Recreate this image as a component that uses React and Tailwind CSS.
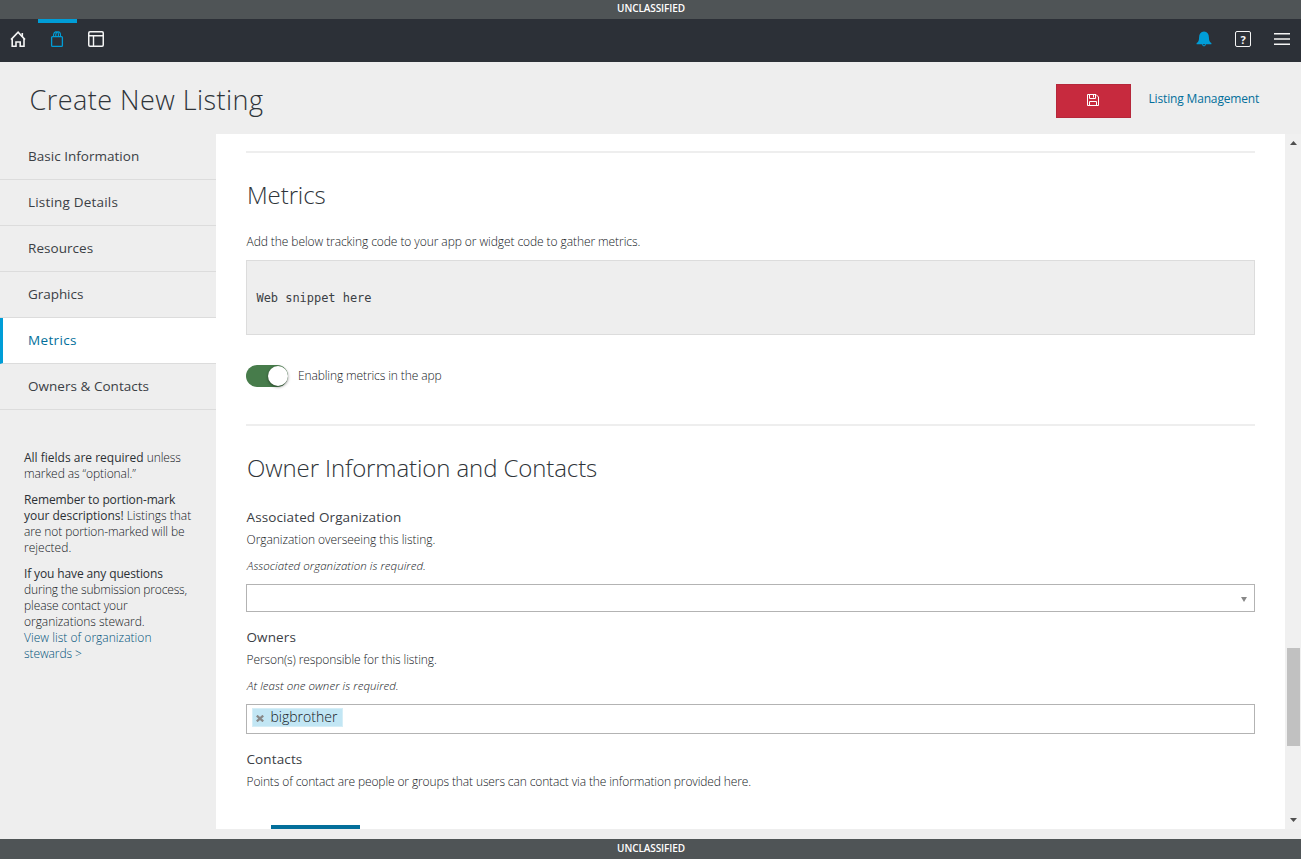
function Banner({ leading }) {
  return (
    <div
      className={
        "flex h-5 shrink-0 items-start justify-center bg-[#4f5456] pl-px text-[10px] font-semibold tracking-[-0.1px] text-white " +
        leading
      }
    >
      UNCLASSIFIED
    </div>
  );
}

function HomeIcon() {
  return (
    <svg width="16" height="18" viewBox="0 0 16 18" fill="none" stroke="#f4f4f4" strokeWidth="1.6">
      <path d="M2.2 8.6V16.2H6V12H10.2V16.2H14V8.6" />
      <path d="M1 9.6 8.1 2.1 15 9.6" />
      <path d="M12.3 3V7" />
    </svg>
  );
}

function BagIcon() {
  return (
    <svg width="16" height="18" viewBox="0 0 16 18" fill="none" stroke="#009dd7" strokeWidth="1.3">
      <rect x="2.6" y="6.6" width="10.8" height="9.8" rx="1" />
      <path d="M4.6 6.6V4.4Q5 2.3 6.6 1.9Q9 1.4 9.4 4V6.6M6.8 6.6V4.3Q7.4 1.6 9.2 1.7Q11.4 2 11.5 4.4V6.6" strokeWidth="1.1" />
    </svg>
  );
}

function LayoutIcon() {
  return (
    <svg width="16" height="16" viewBox="0 0 16 16" fill="none" stroke="#f4f4f4" strokeWidth="1.5">
      <rect x="0.75" y="0.75" width="14.5" height="14.5" rx="1.2" />
      <path d="M1 4.8H15M5.5 5V15" strokeWidth="1.4" />
    </svg>
  );
}

function BellIcon() {
  return (
    <svg width="16" height="16" viewBox="0 0 16 16" fill="#009dd7">
      <path d="M8 0.6C4.8 0.9 3.1 3 3.1 6.2C3.1 9.4 2.4 10.9 0.6 12V13.2H15.4V12C13.6 10.9 12.9 9.4 12.9 6.2C12.9 3 11.2 0.9 8 0.6Z" />
      <path d="M6.3 13.2Q6.5 14.9 8 14.9T9.7 13.2" fill="none" stroke="#009dd7" strokeWidth="1" />
    </svg>
  );
}

function SaveIcon() {
  return (
    <svg width="12" height="12" viewBox="0 0 12 12" fill="none" stroke="#fff" strokeWidth="1">
      <path d="M0.5 0.5H9L11.5 3V11.5H0.5Z" />
      <path d="M2.5 0.5V4.5H8.5V0.5M2.5 11.5V7.5H9.5V11.5" />
      <path d="M6.5 1V3.5" />
    </svg>
  );
}

const tabs = [
  ["Basic Information", "tracking-[0.02px]"],
  ["Listing Details", "tracking-[0.19px]"],
  ["Resources", "tracking-[0.05px]"],
  ["Graphics", "tracking-[-0.05px]"],
  ["Metrics", "tracking-[0.35px]"],
  ["Owners & Contacts", "tracking-[0.03px]"],
];

function Sidebar() {
  return (
    <aside className="w-[216px] shrink-0">
      <nav className="text-[13.5px] leading-[44px] text-[#3b4045]">
        {tabs.map(([name, tracking]) => (
          <a
            key={name}
            className={
              "block h-[46px] border-b border-[#dcdcdc] " +
              tracking +
              (name === "Metrics" ? " border-l-3 border-l-[#009dd7] bg-white pl-[25px] text-[#036f9b]" : " pl-7")
            }
          >
            {name}
          </a>
        ))}
      </nav>
      <div className="mt-10 flex flex-col gap-2.5 pl-6 text-[12px] leading-4 font-light whitespace-nowrap text-[#14181c]">
        <p>
          <b className="font-normal text-[#2b3035]">All fields are required</b>{" "}
          <span className="tracking-[-0.1px]">unless</span>
          <br />
          <span className="tracking-[-0.08px]">marked as “optional.”</span>
        </p>
        <p className="tracking-[-0.1px]">
          <b className="font-normal tracking-[-0.12px] text-[#2b3035]">
            Remember to portion-mark
            <br />
            <span className="tracking-[-0.03px]">your descriptions!</span>
          </b>{" "}
          <span className="tracking-[-0.02px]">Listings that</span>
          <br />
          are not portion-marked will be
          <br />
          <span className="tracking-[0.05px]">rejected.</span>
        </p>
        <p className="tracking-[-0.17px]">
          <b className="font-normal tracking-[-0.13px] text-[#2b3035]">If you have any questions</b>
          <br />
          during the submission process,
          <br />
          <span className="tracking-[-0.1px]">please contact your</span>
          <br />
          <span className="tracking-[-0.04px]">organizations steward.</span>
          <br />
          <a className="tracking-[0.03px] text-[#00527a]">
            View list of organization
            <br />
            <span className="tracking-[-0.08px]">stewards &gt;</span>
          </a>
        </p>
      </div>
    </aside>
  );
}

function Title({ children }) {
  return (
    <h2 className="mt-[27px] pl-px text-[24px] leading-[30px] font-light tracking-[-0.1px] text-[#2f3439]">{children}</h2>
  );
}

function Label({ children }) {
  return <h3 className="pl-[0.5px] text-[13.5px] leading-5 tracking-[0.12px] text-[#3b4045]">{children}</h3>;
}

function Hint({ tracking, children }) {
  return <p className={"mt-0.5 pl-[0.5px] text-[12px] leading-[22px] font-light " + tracking}>{children}</p>;
}

function Required({ children }) {
  return <p className="mt-[5px] pl-px text-[11.5px] leading-5 font-light tracking-[0.05px] italic">{children}</p>;
}

function Scrollbar() {
  return (
    <div className="flex w-4 shrink-0 flex-col items-center bg-[#f0f0f0] pt-[7px] pb-[7px]">
      <svg width="7" height="4" viewBox="0 0 7 4" fill="#505050">
        <path d="M0 4 3.5 0 7 4Z" />
      </svg>
      <div className="mt-[503px] mr-px h-[98px] w-[13px] self-end bg-[#c1c1c1]" />
      <svg className="mt-auto" width="7" height="4" viewBox="0 0 7 4" fill="#505050">
        <path d="M0 0 3.5 4 7 0Z" />
      </svg>
    </div>
  );
}

export default function App() {
  return (
    <div className="flex h-[859px] w-[1301px] flex-col overflow-hidden bg-[#eeeeee] font-['Open_Sans','Noto_Sans',sans-serif]">
      <div className="h-[19px] shrink-0 overflow-hidden">
        <Banner leading="leading-[17px]" />
      </div>
      <header className="flex h-[43px] shrink-0 items-stretch bg-[#2c3037]">
        <div className="flex w-[38px] items-center justify-center pr-0.5 pb-[3px]">
          <HomeIcon />
        </div>
        <div className="flex w-[39px] items-center justify-center border-t-4 border-[#009dd7] pr-px pb-[7px]">
          <BagIcon />
        </div>
        <div className="flex w-[39px] items-center justify-center pr-px pb-[3px]">
          <LayoutIcon />
        </div>
        <div className="ml-auto flex items-center gap-[23px] pr-[11px] pb-[3px]">
          <BellIcon />
          <div className="flex size-4 items-center justify-center rounded-[2px] border-[1.5px] border-[#f4f4f4] font-['Noto_Sans'] text-[11px] leading-none font-bold text-[#f4f4f4]">
            ?
          </div>
          <svg width="16" height="12" viewBox="0 0 16 12" fill="#f4f4f4">
            <path d="M0 0H16V1.6H0ZM0 5.2H16V6.8H0ZM0 10.4H16V12H0Z" />
          </svg>
        </div>
      </header>
      <div className="flex h-[72px] shrink-0 items-start pr-[42px] pl-[29.5px]">
        <h1 className="mt-[18px] text-[27px] leading-10 font-light tracking-[0.46px] text-[#2f3439]">
          Create New Listing
        </h1>
        <button className="mt-[22px] mr-[17px] ml-auto flex h-[34px] w-[75px] items-center justify-center border border-[#b5273a] bg-[#c72a3e] pr-px pb-0.5">
          <SaveIcon />
        </button>
        <a className="mt-[26px] w-[111px] pl-[0.5px] text-[12px] leading-[22px] tracking-[-0.16px] whitespace-nowrap text-[#036f9b]">
          Listing Management
        </a>
      </div>
      <div className="flex h-[695px] shrink-0">
        <Sidebar />
        <main className="h-full grow overflow-hidden bg-white pt-[17px] pr-[30px] pl-[30px] text-[#14181c]">
          <div className="h-0.5 bg-[#eeeeee]" />
          <Title>Metrics</Title>
          <p className="mt-[21px] pl-[0.5px] text-[12px] leading-[22px] font-light tracking-[-0.075px]">
            Add the below tracking code to your app or widget code to gather metrics.
          </p>
          <pre className="mt-[7px] h-[75px] border border-[#dcdcdc] bg-[#eeeeee] pl-[9.5px] font-['DejaVu_Sans_Mono',monospace] text-[12px] leading-[75px] tracking-[-0.04px] text-[#3b4045]">
            Web snippet here
          </pre>
          <div className="mt-[30px] flex h-[22px] items-start">
            <div className="flex h-[22px] w-[42px] items-center justify-end rounded-full bg-[#477c4b]">
              <div className="size-5 rounded-full bg-white shadow-[0_1px_3px_rgba(0,0,0,0.5)]" />
            </div>
            <span className="ml-2.5 text-[12px] leading-[22px] font-light tracking-[-0.11px]">
              Enabling metrics in the app
            </span>
          </div>
          <div className="mt-[37px] h-0.5 bg-[#eeeeee]" />
          <Title>Owner Information and Contacts</Title>
          <div className="mt-6">
            <Label>Associated Organization</Label>
            <Hint tracking="tracking-[-0.04px]">Organization overseeing this listing.</Hint>
            <Required>Associated organization is required.</Required>
            <div className="mt-2 flex h-7 items-center justify-end border border-[#b3b3b3] pr-[7px]">
              <svg className="mt-0.5" width="6" height="5" viewBox="0 0 6 5" fill="#888">
                <path d="M0 0H6L3 5Z" />
              </svg>
            </div>
          </div>
          <div className="mt-[15px]">
            <Label>Owners</Label>
            <Hint tracking="tracking-[-0.1px]">Person(s) responsible for this listing.</Hint>
            <Required>At least one owner is required.</Required>
            <div className="mt-2 h-[30px] border border-[#b3b3b3] pt-[3px] pl-[5px]">
              <div className="flex h-[19px] w-[91px] items-start border border-[#d5eef7] bg-[#c2e6f4] pl-[3px]">
                <svg className="mt-[6px]" width="8" height="7" viewBox="0 0 8 7" stroke="#888" strokeWidth="2.2">
                  <path d="M0.8 0.6 7.2 6.4M7.2 0.6 0.8 6.4" />
                </svg>
                <span className="ml-[6.5px] text-[14px] leading-[15px] font-light">bigbrother</span>
              </div>
            </div>
          </div>
          <div className="mt-[15px]">
            <Label>Contacts</Label>
            <Hint tracking="tracking-[-0.12px]">
              Points of contact are people or groups that users can contact via the information provided here.
            </Hint>
          </div>
          <div className="mt-8 ml-[25px] h-8 w-[89px] bg-[#036f9b]" />
        </main>
        <Scrollbar />
      </div>
      <div className="mt-[10px] shrink-0">
        <Banner leading="leading-[19px]" />
      </div>
    </div>
  );
}
